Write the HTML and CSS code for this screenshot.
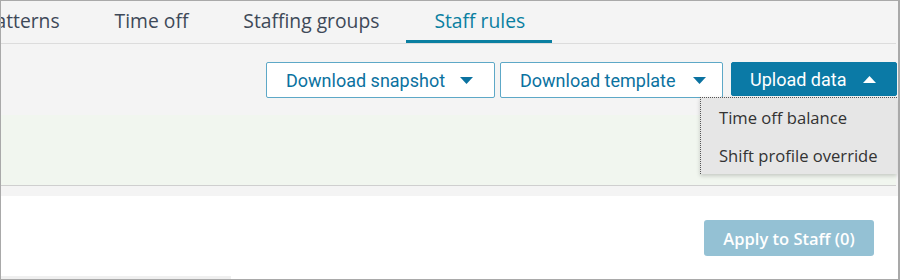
FILE: index.html
```html
<!DOCTYPE html>
<html lang="en">
<head>
  <meta charset="utf-8">
  <title>Staff rules</title>
  <link rel="stylesheet" href="styles.css">
</head>
<body>
  <div class="frame">
    <nav class="tabs">
      <a class="tab tab-first">Shift patterns</a>
      <a class="tab">Time off</a>
      <a class="tab">Staffing groups</a>
      <a class="tab active">Staff rules</a>
    </nav>

    <div class="toolbar">
      <button class="btn btn-snapshot">
        Download snapshot
        <svg class="caret" width="13" height="7" viewBox="0 0 13 7"><path d="M0 0h13L6.5 7z"/></svg>
      </button>
      <button class="btn btn-template">
        Download template
        <svg class="caret" width="13" height="7" viewBox="0 0 13 7"><path d="M0 0h13L6.5 7z"/></svg>
      </button>
      <div class="upload">
        <button class="btn btn-primary">
          Upload data
          <svg class="caret" width="13" height="7" viewBox="0 0 13 7"><path d="M0 7h13L6.5 0z"/></svg>
        </button>
        <ul class="menu">
          <li>Time off balance</li>
          <li>Shift profile override</li>
        </ul>
      </div>
    </div>

    <div class="notice"></div>

    <div class="panel">
      <div class="panel-actions">
        <button class="btn-apply" disabled>Apply to Staff (0)</button>
      </div>
      <div class="scrollbar"></div>
    </div>
  </div>
</body>
</html>
```

FILE: styles.css
```css
body {
  margin: 0;
  padding: 0;
  font-family: "Open Sans", Arial, sans-serif;
  background: white;
}
.frame {
  width: 900px;
  height: 280px;
  box-sizing: border-box;
  border: 1px solid #a9a9a9;
  border-right-width: 2px;
  background: #f4f4f4;
  display: flex;
  flex-direction: column;
  overflow: hidden;
}

/* tabs */
.tabs {
  display: flex;
  height: 42px;
  border-bottom: 1px solid #dcdcdc;
  margin-right: 2px;
  margin-left: -91px;
}
.tab {
  display: flex;
  align-items: center;
  padding: 0 27px 1px 28px;
  font-size: 19.3px;
  color: #3e4958;
  border-bottom: 3px solid transparent;
  white-space: nowrap;
}
.tab.active {
  color: #0a7fa1;
  border-bottom-color: #0a7fa1;
}

/* toolbar */
.toolbar {
  height: 71px;
  box-sizing: border-box;
  display: flex;
  justify-content: flex-end;
  align-items: flex-start;
  padding: 18px 1px 0 0;
}
.btn {
  display: flex;
  align-items: center;
  height: 36px;
  box-sizing: border-box;
  padding: 0 18px 0 19px;
  border: 1px solid #5da8c7;
  border-radius: 2px;
  background: white;
  color: #0b72a0;
  font-family: Roboto, Arial, sans-serif;
  font-size: 18px;
  white-space: nowrap;
  cursor: pointer;
}
.btn .caret {
  margin-left: auto;
  fill: currentColor;
}
.btn-snapshot {
  width: 229px;
  margin-right: 5px;
  padding-right: 21px;
}
.btn-template {
  width: 223px;
  margin-right: 8px;
  padding-right: 16px;
}
.upload {
  position: relative;
}
.btn-primary {
  width: 166px;
  height: 34px;
  background: #0b7aa6;
  border-color: #0b7aa6;
  color: white;
  padding-left: 18px;
  padding-right: 20px;
}
.menu {
  position: absolute;
  top: 35px;
  right: 0;
  width: 196px;
  margin: 0;
  padding: 0;
  list-style: none;
  background: #e6e6e6;
  border-top: 1px dotted #555;
  border-left: 1px dotted #555;
  box-shadow: 0 2px 4px rgba(0, 0, 0, 0.18);
  z-index: 2;
}
.menu li {
  height: 38px;
  display: flex;
  align-items: center;
  padding-left: 18px;
  font-size: 16.6px;
  color: #333;
  white-space: nowrap;
}

/* status strip */
.notice {
  height: 70px;
  background: #f1f6ef;
  border-bottom: 1px solid #cfcfcf;
  margin-right: 2px;
}

/* apply panel */
.panel {
  flex: 1;
  margin-top: 10px;
  background: white;
  display: flex;
  flex-direction: column;
}
.panel-actions {
  display: flex;
  justify-content: flex-end;
  padding: 24px 24px 0 0;
}
.btn-apply {
  width: 170px;
  height: 36px;
  border: none;
  border-radius: 3px;
  background: #94c1d4;
  color: white;
  font-family: "Open Sans", Arial, sans-serif;
  font-size: 16.5px;
  font-weight: 600;
}
.scrollbar {
  margin-top: auto;
  width: 230px;
  height: 3px;
  background: #efefef;
}
```
